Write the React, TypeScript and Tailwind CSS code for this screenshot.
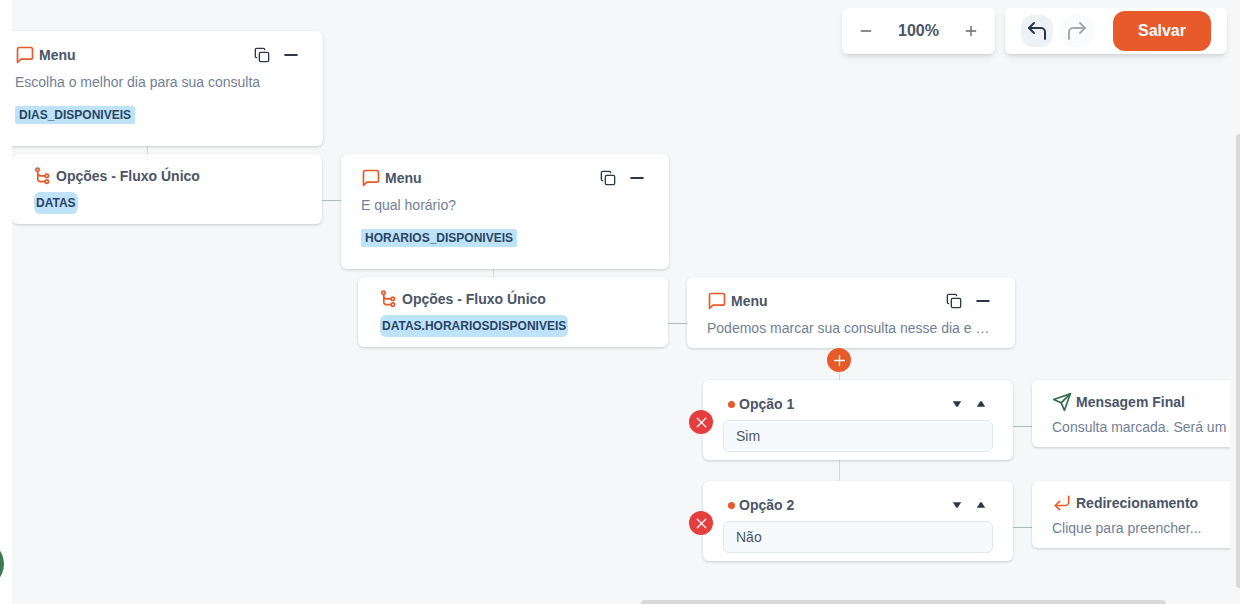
import clsx from "clsx";
import { ReactNode } from "react";
import { Copy, Minus, Plus, X } from "lucide-react";
import {
  FiCornerDownLeft,
  FiCornerUpLeft,
  FiCornerUpRight,
  FiMessageSquare,
  FiSend,
} from "react-icons/fi";

interface CardProps {
  className: string;
  children: ReactNode;
}

function Card({ className, children }: CardProps) {
  return (
    <div
      className={clsx(
        "absolute rounded-md bg-white shadow-[0_1px_3px_rgba(0,0,0,0.18)]",
        className
      )}
    >
      {children}
    </div>
  );
}

function FlowIcon() {
  return (
    <svg
      width="18"
      height="18"
      viewBox="0 0 18 18"
      fill="none"
      stroke="#e85a29"
      strokeWidth="1.7"
    >
      <circle cx="3.5" cy="2.8" r="1.7" />
      <circle cx="12.8" cy="8.8" r="1.7" />
      <circle cx="12.8" cy="14.6" r="1.7" />
      <path d="M3.8 4.7v7.4a2.5 2.5 0 0 0 2.5 2.5h4.8M3.8 6.3a2.5 2.5 0 0 0 2.5 2.5h4.8" />
    </svg>
  );
}

interface MenuProps {
  position: string;
  text: string;
  variable?: string;
}

function MenuNode({ position, text, variable }: MenuProps) {
  return (
    <Card className={clsx("w-[328px] px-5 pt-3", position)}>
      <div className="flex h-6 items-center">
        <FiMessageSquare size={20} color="#e85a29" />
        <h2 className="ml-1 flex-1 font-bold">Menu</h2>
        <button aria-label="Duplicar" className="text-[#2d3748]">
          <Copy size={16} />
        </button>
        <button aria-label="Recolher" className="mr-0.5 ml-[11px] text-[#2d3748]">
          <Minus size={20} strokeWidth={2.4} />
        </button>
      </div>
      <p className="mt-[5px] truncate pb-2.5 text-[#718096]">{text}</p>
      {variable && (
        <span className="mt-1 mb-[22px] inline-block rounded-xs bg-[#bee3f8] px-1 text-xs leading-[18px] font-bold text-[#2a4365]">
          {variable}
        </span>
      )}
    </Card>
  );
}

function FlowNode({ position, variable }: { position: string; variable: string }) {
  return (
    <Card className={clsx("w-[310px] px-[22px] pt-3 pb-2.5", position)}>
      <div className="flex h-5 items-center gap-1">
        <FlowIcon />
        <h2 className="font-bold">Opções - Fluxo Único</h2>
      </div>
      <span className="mt-1.5 block w-fit rounded-md bg-[#bee3f8] px-0.5 text-xs leading-[22px] font-bold text-[#2a4365]">
        {variable}
      </span>
    </Card>
  );
}

interface OptionProps {
  position: string;
  id: string;
  label: string;
  value: string;
}

function OptionNode({ position, id, label, value }: OptionProps) {
  return (
    <Card className={clsx("w-[310px] px-5 pt-3 pb-2", position)}>
      <button
        aria-label="Remover"
        className="absolute top-[30px] -left-3.5 flex size-6 items-center justify-center rounded-full bg-[#e53e3e] text-white"
      >
        <X size={17} strokeWidth={1.8} />
      </button>
      <div className="mb-1 flex h-6 items-center">
        <span className="mr-1 ml-[5px] size-[7px] rounded-full bg-[#e85a29]" />
        <label htmlFor={id} className="flex-1 font-bold">
          {label}
        </label>
        <button aria-label="Mover para baixo" className="flex size-6 items-center justify-center">
          <svg width="10" height="6" viewBox="0 0 10 6" fill="#2d3748">
            <path d="M.8.3h8.4L5.7 5.8H4.3z" />
          </svg>
        </button>
        <button aria-label="Mover para cima" className="flex size-6 items-center justify-center">
          <svg width="10" height="6" viewBox="0 0 10 6" fill="#2d3748">
            <path d="M.8 5.7h8.4L5.7.2H4.3z" />
          </svg>
        </button>
      </div>
      <input
        id={id}
        defaultValue={value}
        className="block h-8 w-full rounded-md border border-[#e2e8f0] bg-[#f6fafd] px-3 outline-none"
      />
    </Card>
  );
}

interface ActionProps {
  position: string;
  icon: ReactNode;
  title: string;
  text: string;
}

function ActionNode({ position, icon, title, text }: ActionProps) {
  return (
    <Card className={clsx("w-[328px] px-5 pt-3 pb-2.5", position)}>
      <div className="flex h-5 items-center gap-1">
        {icon}
        <h2 className="font-bold">{title}</h2>
      </div>
      <p className="mt-[5px] text-[#718096]">{text}</p>
    </Card>
  );
}

function Connectors() {
  return (
    <>
      <div className="absolute top-[146px] left-[135px] h-2 w-px bg-[#d3d8dc]" />
      <div className="absolute top-[269px] left-[481px] h-2 w-px bg-[#d3d8dc]" />
      <div className="absolute top-[348px] left-[827px] h-[133px] w-px bg-[#d3d8dc]" />
      <div className="absolute top-[200px] left-[310px] h-px w-5 bg-[#a9bdb9]" />
      <div className="absolute top-[323px] left-[656px] h-px w-5 bg-[#a9bdb9]" />
      <div className="absolute top-[426px] left-[1001px] h-px w-5 bg-[#a9bdb9]" />
      <div className="absolute top-[527px] left-[1001px] h-px w-5 bg-[#a9bdb9]" />
    </>
  );
}

function Toolbar() {
  return (
    <div className="absolute top-2 right-[3px] flex gap-2.5">
      <div className="flex h-[46px] w-[153px] items-center justify-between rounded-md bg-white px-4 shadow-md">
        <button aria-label="Diminuir zoom" className="text-[#666]">
          <Minus size={16} />
        </button>
        <span className="text-base font-bold">100%</span>
        <button aria-label="Aumentar zoom" className="text-[#666]">
          <Plus size={16} />
        </button>
      </div>
      <div className="flex h-[46px] items-center rounded-md bg-white px-4 shadow-md">
        <button
          aria-label="Desfazer"
          className="flex size-8 items-center justify-center rounded-xl bg-[#edf2f7] text-[#2d3748]"
        >
          <FiCornerUpLeft size={24} />
        </button>
        <button
          aria-label="Refazer"
          disabled
          className="ml-2 flex size-8 items-center justify-center rounded-xl bg-[#fafbfc] text-[#aaa]"
        >
          <FiCornerUpRight size={24} />
        </button>
        <button className="ml-5 h-10 rounded-xl bg-[#e85a29] px-[25px] text-base font-bold text-white">
          Salvar
        </button>
      </div>
    </div>
  );
}

export default function App() {
  return (
    <div className="flex h-screen overflow-hidden bg-[#f5f7f9] font-['Liberation_Sans',Arial,sans-serif] text-sm text-[#4a5568]">
      <aside className="relative w-3 shrink-0 bg-white">
        <div className="absolute bottom-4 -left-11 size-12 rounded-full bg-[#3d7a50]" />
      </aside>
      <div className="flex min-w-0 flex-1 flex-col">
        <div className="flex min-h-0 flex-1">
          <main className="relative min-w-0 flex-1 overflow-hidden">
            <Connectors />
            <MenuNode
              position="top-[31px] -left-[17px]"
              text="Escolha o melhor dia para sua consulta"
              variable="DIAS_DISPONIVEIS"
            />
            <FlowNode position="top-[154px] left-0" variable="DATAS" />
            <MenuNode
              position="top-[154px] left-[329px]"
              text="E qual horário?"
              variable="HORARIOS_DISPONIVEIS"
            />
            <FlowNode
              position="top-[277px] left-[346px]"
              variable="DATAS.HORARIOSDISPONIVEIS"
            />
            <MenuNode
              position="top-[277px] left-[675px]"
              text="Podemos marcar sua consulta nesse dia e …"
            />
            <button
              aria-label="Adicionar opção"
              className="absolute top-[348px] left-[815px] flex size-6 items-center justify-center rounded-full bg-[#e85a29] text-white"
            >
              <Plus size={17} strokeWidth={1.8} />
            </button>
            <OptionNode
              position="top-[380px] left-[691px]"
              id="option-1"
              label="Opção 1"
              value="Sim"
            />
            <OptionNode
              position="top-[481px] left-[691px]"
              id="option-2"
              label="Opção 2"
              value="Não"
            />
            <ActionNode
              position="top-[380px] left-[1020px]"
              icon={<FiSend size={20} color="#2f6b4a" />}
              title="Mensagem Final"
              text="Consulta marcada. Será um"
            />
            <ActionNode
              position="top-[481px] left-[1020px]"
              icon={<FiCornerDownLeft size={20} color="#e85a29" />}
              title="Redirecionamento"
              text="Clique para preencher..."
            />
            <Toolbar />
          </main>
          <div className="flex w-2.5 shrink-0 flex-col items-end pt-[134px] pb-3">
            <div className="w-1 flex-1 rounded-l bg-[#d9d9d9]" />
          </div>
        </div>
        <div className="flex h-1 shrink-0 justify-end pr-[74px]">
          <div className="w-5/11 rounded-t bg-[#d9d9d9]" />
        </div>
      </div>
    </div>
  );
}
